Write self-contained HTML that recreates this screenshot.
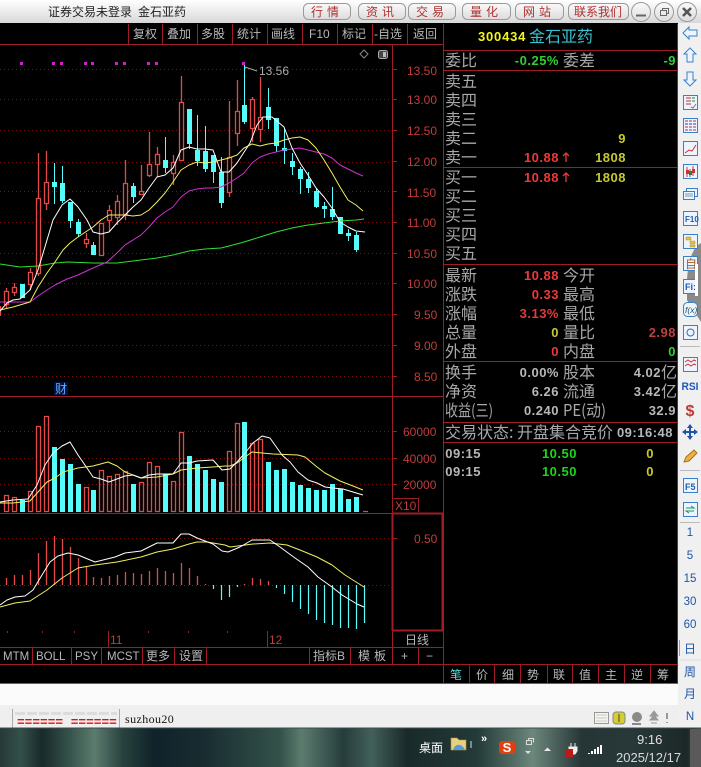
<!DOCTYPE html>
<html><head><meta charset="utf-8"><style>
html,body{margin:0;padding:0;background:#000;width:701px;height:767px;overflow:hidden}
svg{display:block;font-family:"Liberation Sans","Noto Sans CJK SC",sans-serif}
.l{stroke:#a01c24;stroke-width:1;fill:none;shape-rendering:crispEdges}
.d{stroke:#7a1414;stroke-width:1;stroke-dasharray:1 3;fill:none;shape-rendering:crispEdges}
.m{fill:none;stroke-width:1;stroke-linejoin:round}
.ax{font-size:12px;fill:#c23c3c}
.tb{font-size:12px;fill:#b8b8b8}
.lb{font-size:16px;fill:#a8a8a8;font-family:"Noto Sans CJK SC",sans-serif}
.v{font-size:13px;font-weight:bold;letter-spacing:.5px;text-anchor:end}
.si{font-size:11.5px;fill:#1f55a8;text-anchor:middle}
.btn{font-size:12px;fill:#b03030;text-anchor:middle}
.tc{font-size:12px;fill:#b8b8b8;text-anchor:middle}
</style></head><body>
<svg width="701" height="767" viewBox="0 0 701 767" xmlns="http://www.w3.org/2000/svg">
<defs>
<linearGradient id="tg" x1="0" y1="0" x2="0" y2="1"><stop offset="0" stop-color="#fff"/><stop offset="1" stop-color="#d8d8d8"/></linearGradient>
<linearGradient id="bg" x1="0" y1="0" x2="0" y2="1"><stop offset="0" stop-color="#fafafa"/><stop offset="1" stop-color="#dcdcdc"/></linearGradient>
<linearGradient id="task" x1="0" y1="0" x2="1" y2="0">
<stop offset="0" stop-color="#263a38"/><stop offset=".03" stop-color="#34504a"/><stop offset=".06" stop-color="#18292a"/><stop offset=".1" stop-color="#36544c"/><stop offset=".135" stop-color="#5c7c6e"/><stop offset=".175" stop-color="#28423e"/><stop offset=".22" stop-color="#10222a"/><stop offset=".29" stop-color="#182c30"/><stop offset=".4" stop-color="#34524a"/><stop offset=".43" stop-color="#5c7c6e"/><stop offset=".49" stop-color="#263c3c"/><stop offset=".53" stop-color="#42605a"/><stop offset=".58" stop-color="#1a2a2a"/><stop offset=".68" stop-color="#223a38"/><stop offset=".76" stop-color="#6c877c"/><stop offset=".83" stop-color="#263636"/><stop offset=".9" stop-color="#283838"/><stop offset=".98" stop-color="#1c2828"/><stop offset="1" stop-color="#555"/>
</linearGradient>
</defs>

<!-- title bar -->
<rect width="701" height="23" fill="url(#tg)"/>
<text x="48" y="16" font-size="12" fill="#222">证券交易未登录</text>
<text x="138" y="16" font-size="12" fill="#222">金石亚药</text>
<g stroke="#9a9a9a" fill="url(#bg)">
<rect x="303.5" y="3.5" width="47" height="16" rx="5"/>
<rect x="358.5" y="3.5" width="47" height="16" rx="5"/>
<rect x="408.5" y="3.5" width="47" height="16" rx="5"/>
<rect x="462.5" y="3.5" width="48" height="16" rx="5"/>
<rect x="515.5" y="3.5" width="48" height="16" rx="5"/>
<rect x="568.5" y="3.5" width="60" height="16" rx="5"/>
<circle cx="641" cy="12" r="9.5"/><circle cx="664" cy="12" r="9.5"/><circle cx="687" cy="12" r="9.5"/>
</g>
<text class="btn" x="327" y="16" letter-spacing="4">行情</text>
<text class="btn" x="382" y="16" letter-spacing="4">资讯</text>
<text class="btn" x="432" y="16" letter-spacing="4">交易</text>
<text class="btn" x="486" y="16" letter-spacing="4">量化</text>
<text class="btn" x="539" y="16" letter-spacing="4">网站</text>
<text class="btn" x="598" y="16">联系我们</text>
<path d="M636 15.5h10" stroke="#666" stroke-width="2"/>
<path d="M660.5 10.5h6v5h-6zM662.500 10V8.500h6v5H667" fill="none" stroke="#666" stroke-width="1"/>
<path d="M683 8l8 8M691 8l-8 8" stroke="#555" stroke-width="2.500"/>

<!-- black app area -->
<rect x="0" y="23" width="678" height="661" fill="#000"/>
<path class="l" d="M0 44.500H443M128.500 24V44M162.500 24V44M197.500 24V44M232.500 24V44M267.500 24V44M302.500 24V44M337.500 24V44M372.500 24V44M407.500 24V44"/>
<text class="tb" x="133" y="38">复权</text><text class="tb" x="167" y="38">叠加</text><text class="tb" x="201" y="38">多股</text><text class="tb" x="237" y="38">统计</text><text class="tb" x="271" y="38">画线</text><text class="tb" x="309" y="38">F10</text><text class="tb" x="342" y="38">标记</text><text class="tb" x="374" y="38">-自选</text><text class="tb" x="413" y="38">返回</text>

<!-- frame lines -->
<path class="l" d="M443.500 24V683M677.500 24V683M392.500 45V664M0 396.500H443M0 513.500H443M0 647.500H443M0 664.500H678M0 683.500H678M392 631H443M443 50.500H678M443 70.500H678M443 167.500H678M443 264.500H678M443 361.500H678M443 422.500H678M443 442.500H678"/>
<path d="M392 630.500H443M392.500 514V631M442.500 514V631M392 513.500H443" stroke="#a01c24" stroke-width="2" fill="none" shape-rendering="crispEdges"/>
<path class="l" d="M32.500 647V664M71.500 647V664M101.500 647V664M142.500 647V664M174.500 647V664M206.500 647V664M309.500 647V664M350.500 647V664M418.500 647V664M108.500 631V647M267.500 631V647M469.500 664V683M494.500 664V683M520.500 664V683M547.500 664V683M572.500 664V683M598.500 664V683M624.500 664V683M650.500 664V683M393.500 498.500H418.500V512"/>
<path class="l" d="M7.500 631v2M42.500 631v2M74.500 631v2M148.500 631v2M188.500 631v2M227.500 631v2"/>

<!-- grid -->
<path class="d" d="M0 69.500H392M0 99.500H392M0 130.500H392M0 162.500H392M0 191.500H392M0 222.500H392M0 253.500H392M0 283.500H392M0 314.500H392M0 345.500H392M0 376.500H392M0 431.500H392M0 458.500H392M0 484.500H392M0 538.500H392M0 585.500H392"/>
<path class="l" d="M392 69.500h5M392 99.500h5M392 130.500h5M392 161.500h5M392 191.500h5M392 222.500h5M392 253.500h5M392 283.500h5M392 314.500h5M392 345.500h5M392 376.500h5M392 431.500h5M392 458.500h5M392 484.500h5M392 538.500h5"/>
<g class="ax">
<text x="407" y="75">13.50</text><text x="407" y="104">13.00</text><text x="407" y="135">12.50</text><text x="407" y="166">12.00</text><text x="407" y="197">11.50</text><text x="407" y="227">11.00</text><text x="407" y="258">10.50</text><text x="407" y="288">10.00</text><text x="414" y="319">9.50</text><text x="414" y="350">9.00</text><text x="414" y="381">8.50</text>
<text x="403" y="436">60000</text><text x="403" y="463">40000</text><text x="403" y="489">20000</text>
<text x="414" y="543">0.50</text>
<text x="395" y="510" font-size="12">X10</text>
<text x="110" y="644">11</text><text x="269" y="644">12</text>
</g>

<!-- markers -->
<path fill="#d020d0" d="M20 62h3v3h-3zM52 62h3v3h-3zM60 62h3v3h-3zM84 62h3v3h-3zM91 62h3v3h-3zM115 62h3v3h-3zM123 62h3v3h-3zM147 62h3v3h-3zM155 62h3v3h-3zM242 62h3v3h-3z"/>
<path d="M245 67l12 4M245 67v2" stroke="#aaa" fill="none"/>
<text x="259" y="75" font-size="12" fill="#aaa">13.56</text>
<path d="M364 50l4 4-4 4-4-4z" fill="none" stroke="#888"/>
<rect x="378.500" y="50.500" width="9" height="8" rx="2" fill="#444" stroke="#aaa"/><rect x="383" y="52" width="3" height="5" fill="#bbb"/>
<rect x="54" y="382" width="14" height="13" fill="#001040"/>
<text x="55" y="393" font-size="12" fill="#5fb0ff">财</text>

<!-- candles -->
<path stroke="#e24a4a" stroke-width="1.300" fill="none" d="M0.500 306V316M6.500 288V308M14.500 283V296M30.500 268V290M38.500 153V276M46.500 151V210M86.500 233V248M109.500 205V231M117.500 195V225M125.500 160V220M141.500 165V194M149.500 132V177M157.500 147V177M173.500 155V185M181.500 76V160M229.500 101V197M237.500 80V146M252.500 97V142M260.500 77V142"/>
<path stroke="#e24a4a" stroke-width="1.300" fill="#000" d="M4.500 291.500h4v13h-4zM12.500 287.500h4v5h-4zM28.500 272.500h4v12h-4zM36.500 198.500h4v75h-4zM44.500 182.500h4v21h-4zM84.500 239.500h4v4h-4zM99.500 223.500h4v32h-4zM107.500 210.500h4v10h-4zM115.500 201.500h4v16h-4zM123.500 183.500h4v31h-4zM139.500 191.500h4v3h-4zM147.500 164.500h4v11h-4zM155.500 154.500h4v10h-4zM171.500 162.500h4v11h-4zM179.500 102.500h4v58h-4zM227.500 157.500h4v35h-4zM235.500 111.500h4v22h-4zM250.500 99.500h4v29h-4zM258.500 117.500h4v12h-4z"/>
<path stroke="#54fcfc" fill="none" shape-rendering="crispEdges" d="M54.500 163V204M62.500 166V203M70.500 202V228M78.500 219V237M93.500 242V255M133.500 183V203M165.500 137V173M189.500 109V149M197.500 115V166M205.500 126V172M213.500 155V183M221.500 157V208M244.500 65V124M268.500 88V129M276.500 118V152M284.500 129V164M292.500 153V175M300.500 167V194M308.500 172V193M316.500 188V208M324.500 202V218M332.500 187V220M340.500 217V234M348.500 229V241M356.500 232V252"/>
<path fill="#54fcfc" shape-rendering="crispEdges" d="M20 284h5v14h-5zM52 182h5v5h-5zM60 183h5v18h-5zM68 202h5v19h-5zM76 222h5v12h-5zM91 245h5v10h-5zM131 186h5v11h-5zM163 160h5v8h-5zM187 109h5v35h-5zM195 150h5v11h-5zM203 151h5v18h-5zM211 155h5v17h-5zM219 172h5v31h-5zM242 105h5v17h-5zM266 107h5v13h-5zM274 118h5v28h-5zM282 148h5v3h-5zM290 161h5v6h-5zM298 169h5v10h-5zM306 179h5v9h-5zM314 191h5v16h-5zM322 206h5v3h-5zM330 209h5v8h-5zM338 217h5v17h-5zM346 233h5v3h-5zM354 235h5v15h-5z"/>

<!-- MA lines -->
<polyline class="m" stroke="#30e030" points="0,264 20,267 38,266 55,263 68,262 93,263 117,263 125,262 141,260 157,258 173,255 189,251 205,249 221,248 229,246 244,242 260,237 276,232 292,228 308,225 324,223 340,221 356,220 364,219"/>
<polyline class="m" stroke="#d030d0" points="0,302 13,302 30,302 38,296 47,290 55,285 67,279 78,275 93,268 107,262 117,253 125,245 141,235 149,227 157,218 165,212 173,207 181,197 189,191 197,189 205,188 213,188 221,187 229,183 237,178 244,173 252,163 260,157 268,154 276,152 284,150 292,149 300,148 308,150 316,152 324,154 332,158 340,165 348,169 356,173 363,176"/>
<polyline class="m" stroke="#f0f060" points="0,310 13,307 30,302 38,287 47,273 55,262 63,250 70,243 78,237 87,231 93,227 101,220 109,215 125,215 133,216 141,215 149,210 157,202 165,193 173,182 181,170 189,165 197,162 205,163 213,162 221,160 229,158 237,155 244,148 252,144 260,146 268,144 276,143 284,140 292,138 300,137 308,140 316,148 324,160 332,173 340,187 348,200 356,205 363,211"/>
<polyline class="m" stroke="#fff" points="0,311 7,303 13,300 20,299 30,290 38,270 47,240 53,220 62,205 70,199 78,207 87,220 93,232 101,234 109,232 117,223 125,215 133,207 141,200 149,188 157,177 165,175 173,168 181,150 189,147 197,149 205,149 213,150 221,172 229,172 237,163 250,143 257,125 263,117 272,117 284,127 292,148 300,163 308,175 316,188 324,197 332,208 340,222 348,227 356,231 365,232"/>

<!-- volume -->
<path stroke="#e24a4a" stroke-width="1.300" fill="none" d="M4.500 495.500h4v16h-4zM12.500 497.500h4v14h-4zM28.500 491.500h4v20h-4zM36.500 426.500h4v85h-4zM44.500 416.500h4v95h-4zM84.500 487.500h4v24h-4zM99.500 470.500h4v41h-4zM107.500 476.500h4v35h-4zM115.500 474.500h4v37h-4zM123.500 471.500h4v40h-4zM139.500 482.500h4v29h-4zM147.500 462.500h4v49h-4zM155.500 466.500h4v45h-4zM171.500 481.500h4v30h-4zM179.500 432.500h4v79h-4zM227.500 451.500h4v60h-4zM235.500 423.500h4v88h-4zM250.500 443.500h4v68h-4zM258.500 439.500h4v72h-4zM363 511.500h5"/>
<path fill="#54fcfc" shape-rendering="crispEdges" d="M20 500h5v12h-5zM52 447h5v65h-5zM60 459h5v53h-5zM68 464h5v48h-5zM76 484h5v28h-5zM91 490h5v22h-5zM131 484h5v28h-5zM163 474h5v38h-5zM187 456h5v56h-5zM195 464h5v48h-5zM203 470h5v42h-5zM211 479h5v33h-5zM219 482h5v30h-5zM242 422h5v90h-5zM266 462h5v50h-5zM274 470h5v42h-5zM282 469h5v43h-5zM290 482h5v30h-5zM298 485h5v27h-5zM306 488h5v24h-5zM314 490h5v22h-5zM322 490h5v22h-5zM330 484h5v28h-5zM338 489h5v23h-5zM346 499h5v13h-5zM354 497h5v15h-5z"/>
<polyline class="m" stroke="#f0f060" points="0,503 13,503 30,501 38,492 47,482 55,478 63,472 78,468 93,466 108,462 117,466 125,472 133,475 141,478 157,477 173,474 181,470 197,468 213,467 225,466 230,466 237,463 245,457 252,452 262,453 273,454 298,455 305,457 317,467 325,473 340,481 353,486 363,490"/>
<polyline class="m" stroke="#fff" points="0,502 13,500 28,499 37,485 45,465 53,453 62,446 70,442 78,455 87,468 93,477 101,479 109,482 117,479 125,476 133,475 141,478 149,475 157,474 173,474 181,463 189,463 197,461 213,460 222,470 230,469 237,462 245,453 253,443 262,436 270,438 282,455 290,462 298,472 308,480 317,483 325,487 333,488 343,489 353,492 363,495"/>

<!-- MACD -->
<path stroke="#e24a4a" stroke-width="1.300" fill="none" d="M6.500 578V585M14.500 575V585M22.500 575V585M30.500 570V585M38.500 553V585M46.500 541V585M54.500 536V585M62.500 539V585M70.500 547V585M78.500 558V585M86.500 566V585M93.500 577V585M101.500 578V585M109.500 576V585M117.500 575V585M125.500 572V585M133.500 573V585M141.500 574V585M149.500 571V585M157.500 568V585M165.500 571V585M173.500 573V585M181.500 563V585M189.500 568V585M197.500 576V585M205.500 584V585M244.500 584V585M252.500 578V585M260.500 579V585M268.500 581V585"/>
<path stroke="#54fcfc" stroke-width="1.200" fill="none" d="M213.500 585V589M221.500 585V600M229.500 585V597M237.500 585V587M276.500 585V588M284.500 585V594M292.500 585V602M300.500 585V609M308.500 585V614M316.500 585V620M324.500 585V623M332.500 585V625M340.500 585V628M348.500 585V628M356.500 585V629M364.500 585V623"/>
<polyline class="m" stroke="#f0f060" points="0,607 15,603 30,601 47,590 62,578 78,568 95,565 117,562 141,557 157,552 173,549 189,544 197,542 207,542 225,545 230,547 253,544 270,543 287,545 300,550 317,557 332,565 345,575 364,587"/>
<polyline class="m" stroke="#fff" points="0,605 7,600 15,597 25,596 33,590 42,575 50,562 58,556 68,553 78,555 95,562 115,557 125,553 141,551 157,543 173,543 181,534 189,534 197,538 213,544 222,551 228,552 240,547 252,540 270,540 280,547 295,558 308,567 318,577 332,587 342,595 357,604 364,607"/>

<!-- bottom tabs -->
<g font-size="11.500" fill="#b8b8b8"><text x="3" y="660">MTM</text><text x="36" y="660">BOLL</text><text x="75" y="660">PSY</text><text x="107" y="660">MCST</text></g>
<text class="tb" x="146" y="660">更多</text><text class="tb" x="179" y="660">设置</text><text class="tb" x="313" y="660">指标B</text><text class="tb" x="358" y="660">模</text><text class="tb" x="374" y="660">板</text>
<text class="tb" x="401" y="660">+</text><text class="tb" x="426" y="660">−</text><text class="tb" x="405" y="644">日线</text>
<text class="tc" x="456" y="679" style="fill:#54e0e0">笔</text><text class="tc" x="482" y="679">价</text><text class="tc" x="508" y="679">细</text><text class="tc" x="533" y="679">势</text><text class="tc" x="559" y="679">联</text><text class="tc" x="585" y="679">值</text><text class="tc" x="611" y="679">主</text><text class="tc" x="637" y="679">逆</text><text class="tc" x="663" y="679">筹</text>

<!-- right panel -->
<text x="478" y="41" font-size="13" font-weight="bold" letter-spacing=".8" fill="#f4f420">300434</text>
<text x="529" y="42" font-size="16" fill="#38c0d0">金石亚药</text>
<g class="lb">
<text x="445" y="66">委比</text><text x="563" y="66">委差</text>
<text x="445" y="87">卖五</text><text x="445" y="106">卖四</text><text x="445" y="125">卖三</text><text x="445" y="144">卖二</text><text x="445" y="163">卖一</text>
<text x="445" y="183">买一</text><text x="445" y="202">买二</text><text x="445" y="221">买三</text><text x="445" y="240">买四</text><text x="445" y="259">买五</text>
<text x="445" y="281">最新</text><text x="563" y="281">今开</text><text x="445" y="300">涨跌</text><text x="563" y="300">最高</text><text x="445" y="319">涨幅</text><text x="563" y="319">最低</text><text x="445" y="338">总量</text><text x="563" y="338">量比</text><text x="445" y="357">外盘</text><text x="563" y="357">内盘</text>
<text x="445" y="378">换手</text><text x="563" y="378">股本</text><text x="445" y="397">净资</text><text x="563" y="397">流通</text><text x="445" y="416" textLength="48" lengthAdjust="spacingAndGlyphs">收益(三)</text><text x="563" y="416" textLength="43" lengthAdjust="spacingAndGlyphs">PE(动)</text>
<text x="445" y="438">交易状态: 开盘集合竞价</text>
<text x="661" y="378">亿</text><text x="661" y="397">亿</text>
</g>
<g class="v">
<text x="559" y="65" fill="#30d030">-0.25%</text><text x="676" y="65" fill="#30d030">-9</text>
<text x="626" y="143" fill="#c8c830">9</text>
<text x="559" y="162" fill="#ec3a3a">10.88</text><text x="626" y="162" fill="#c8c830">1808</text>
<text x="559" y="182" fill="#ec3a3a">10.88</text><text x="626" y="182" fill="#c8c830">1808</text>
<text x="559" y="280" fill="#ec3a3a">10.88</text>
<text x="559" y="299" fill="#ec3a3a">0.33</text>
<text x="559" y="318" fill="#e03a3a">3.13%</text>
<text x="559" y="337" fill="#c8c830">0</text><text x="676" y="337" fill="#c04040">2.98</text>
<text x="559" y="356" fill="#ec3a3a">0</text><text x="676" y="356" fill="#30d030">0</text>
<text x="559" y="377" fill="#b8b8b8">0.00%</text><text x="661" y="377" fill="#b8b8b8">4.02</text>
<text x="559" y="396" fill="#b8b8b8">6.26</text><text x="661" y="396" fill="#b8b8b8">3.42</text>
<text x="559" y="415" fill="#b8b8b8">0.240</text><text x="676" y="415" fill="#b8b8b8">32.9</text>
<text x="673" y="437" fill="#b8b8b8">09:16:48</text>
<text x="481" y="458" fill="#b8b8b8">09:15</text><text x="577" y="458" fill="#18d818">10.50</text><text x="654" y="458" fill="#c8c830">0</text>
<text x="481" y="476" fill="#b8b8b8">09:15</text><text x="577" y="476" fill="#18d818">10.50</text><text x="654" y="476" fill="#c8c830">0</text>
</g>
<path d="M566 153v9M563 156l3-3 3 3M566 173v9M563 176l3-3 3 3" stroke="#ec3a3a" fill="none" stroke-width="1.300"/>

<!-- lower bands -->
<rect x="0" y="684" width="678" height="21" fill="#fbfbfb"/>
<rect x="0" y="705" width="678" height="23" fill="#efefef"/>
<path d="M0 683.500H678" stroke="#c04040"/>
<path d="M12.500 709V728M119.500 709V728" stroke="#aaa"/>
<path d="M15 713.500H117" stroke="#dcdcdc" stroke-width="3" stroke-dasharray="10 2"/>
<text x="17" y="726" font-family="Liberation Mono" font-size="12.800" font-weight="bold" fill="#e01010">====== ======</text>
<text x="125" y="723" font-family="Liberation Serif" font-size="12" letter-spacing=".4" fill="#111">suzhou20</text>
<rect x="594.500" y="712.500" width="14" height="11" fill="#f4f4e8" stroke="#999"/><path d="M596 715h11M596 718h11M596 721h11" stroke="#ccc"/>
<rect x="613" y="712" width="12" height="12" rx="3" fill="#d4cc30" stroke="#888"/><path d="M619 714v8" stroke="#444"/>
<circle cx="637" cy="717" r="5" fill="#8a8a8a"/><path d="M632 724h9" stroke="#888" stroke-width="2"/>
<path d="M654 711l4 5h-8zM654 715l4 5h-8zM651 723h6" fill="#999" stroke="#999"/>
<path d="M667 713v6M667 722v1" stroke="#999" stroke-width="2"/>

<!-- sidebar -->
<rect x="678" y="23" width="23" height="705" fill="#f0f0f0"/>
<path d="M701 243C692 248 688 262 687 280V300L701 322Z" fill="#8a8a8a"/>
<g fill="#eef4ff" stroke="#3a80c8" stroke-width="1">
<path d="M683 33l6-6v3h8v6h-8v3z"/><path d="M690 48l6 6h-3v8h-6v-8h-3z"/><path d="M690 86l6-6h-3v-8h-6v8h-3z"/>
<rect x="683.500" y="95.500" width="14" height="14"/><rect x="683.500" y="118.500" width="14" height="14"/><rect x="683.500" y="141.500" width="14" height="14"/><rect x="683.500" y="164.500" width="14" height="14"/>
<rect x="686.500" y="188.500" width="11" height="8"/><rect x="683.500" y="191.500" width="11" height="8"/>
<rect x="683.500" y="211.500" width="14" height="14"/><rect x="683.500" y="234.500" width="14" height="14"/><rect x="683.500" y="256.500" width="14" height="14"/><rect x="683.500" y="279.500" width="14" height="14"/>
<rect x="683.500" y="302.500" width="14" height="14" rx="4"/><rect x="683.500" y="325.500" width="14" height="14"/><rect x="683.500" y="357.500" width="14" height="14"/><rect x="683.500" y="478.500" width="14" height="14"/><rect x="683.500" y="502.500" width="14" height="14"/>
</g>
<path d="M686 98h5M686 101h5M686 104h5" stroke="#c03030"/><path d="M692 98h3M692 101h3" stroke="#208040"/><path d="M691 107l2 1 3-4" stroke="#777" fill="none"/>
<path d="M685 121h11M685 124h11M685 127h11M685 130h11" stroke="#c03030" stroke-dasharray="3 1"/><path d="M685 124h11" stroke="#2040c0" stroke-dasharray="3 1"/>
<path d="M685 153l4-3 3 1 4-6" stroke="#d03030" fill="none"/>
<path d="M687 167v10M693 166v10" stroke="#d03030"/><path d="M690 169v8" stroke="#208040"/><path d="M686 170h3v4h-3zM692 169h3v4h-3z" fill="#d03030"/><path d="M689 171h3v4h-3z" fill="#208040"/>
<path d="M685 194h8M685 196h8" stroke="#7a9ab8"/>
<text x="685" y="222" font-size="8" font-weight="bold" fill="#1a60b0">F10</text>
<path d="M686 237h5v3h-5zM690 241h5v3h-5zM690 245h5v2h-5z" fill="#e8c040" stroke="#b09020" stroke-width=".5"/>
<text x="685" y="268" font-size="12" fill="#a06030">自</text>
<text x="685" y="290" font-size="9" font-weight="bold" fill="#1a60b0">Fi:</text>
<text x="685" y="313" font-size="8.500" font-style="italic" fill="#255">f(x)</text>
<circle cx="690.500" cy="332.500" r="3.500" fill="none" stroke="#2a70b0"/>
<path d="M680 346.500h20M680 470.500h20M680 522.500h20" stroke="#bbb"/>
<path d="M685 362l3-2 3 2 3-2 2 1M685 366l3-2 3 2 3-2 2 1" stroke="#d03030" fill="none"/>
<rect x="695" y="264" width="3" height="32" fill="#fff"/>
<text x="690" y="390" font-size="11" font-weight="bold" fill="#1f55c0" text-anchor="middle" textLength="17" lengthAdjust="spacingAndGlyphs">RSI</text>
<text x="690" y="416" font-size="16" font-weight="bold" fill="#c03838" text-anchor="middle">$</text>
<path d="M690 424l3 4h-2v3h3v-2l4 3-4 3v-2h-3v3h2l-3 4-3-4h2v-3h-3v2l-4-3 4-3v2h3v-3h-2z" fill="#1f55a8"/>
<path d="M684 462l2-5 8-7 3 3-8 8z" fill="#f0b040" stroke="#a07020"/>
<text x="685" y="490" font-size="9" font-weight="bold" fill="#1a60b0">F5</text>
<path d="M686 508h8l-3-2M694 511h-8l3 2" stroke="#209060" fill="none"/>
<g class="si"><text x="690" y="536">1</text><text x="690" y="559">5</text><text x="690" y="582">15</text><text x="690" y="605">30</text><text x="690" y="628">60</text><text x="690" y="653" font-size="12">日</text><text x="690" y="676" font-size="12">周</text><text x="690" y="698" font-size="12">月</text><text x="690" y="720">N</text></g>
<path d="M679.500 640v16" stroke="#999"/><path d="M680 660H701" stroke="#ddd"/>

<!-- taskbar -->
<rect x="0" y="728" width="701" height="39" fill="url(#task)"/>
<path d="M0 728H701" stroke="#3c4c4c" stroke-width="1"/>
<text x="419" y="752" font-size="12" fill="#fff">桌面</text>
<path d="M451 738h6l2 2h7v10h-15z" fill="#e8d080" stroke="#b09840" stroke-width=".6"/><path d="M453 750c2-7 9-7 12 0z" fill="#5a9ad8"/>
<path d="M471 741v7" stroke="#ddd"/>
<text x="484" y="742" font-size="11" font-weight="bold" fill="#fff" text-anchor="middle">»</text>
<rect x="499" y="741" width="16" height="13" rx="3" fill="#e04010"/>
<text x="507" y="752" font-size="13" font-weight="bold" fill="#fff" text-anchor="middle">S</text>
<path d="M526.500 740.500h5v4h-5zM528.500 740V738.500h5v4" stroke="#ddd" fill="none"/><path d="M525 751h6l-3 3z" fill="#ddd"/>
<path d="M544 751l3.500-3.500 3.500 3.500z" fill="#e8e8e8"/>
<path d="M571 743v4M575 743v4M569 747h8v4l-2 3h-4l-2-3z" fill="#eee" stroke="#eee"/><rect x="565" y="749" width="8" height="8" fill="#c01818"/>
<path d="M589 753v1M592 751v3M595 749v5M598 747v7M601 745v9" stroke="#fff" stroke-width="2"/>
<text x="637" y="744" font-size="13" fill="#e0e0e0">9:16</text>
<text x="616" y="762" font-size="13" fill="#d8d8d8">2025/12/17</text>
<rect x="690" y="729" width="11" height="38" fill="#5a5a5a"/>
</svg>
</body></html>
